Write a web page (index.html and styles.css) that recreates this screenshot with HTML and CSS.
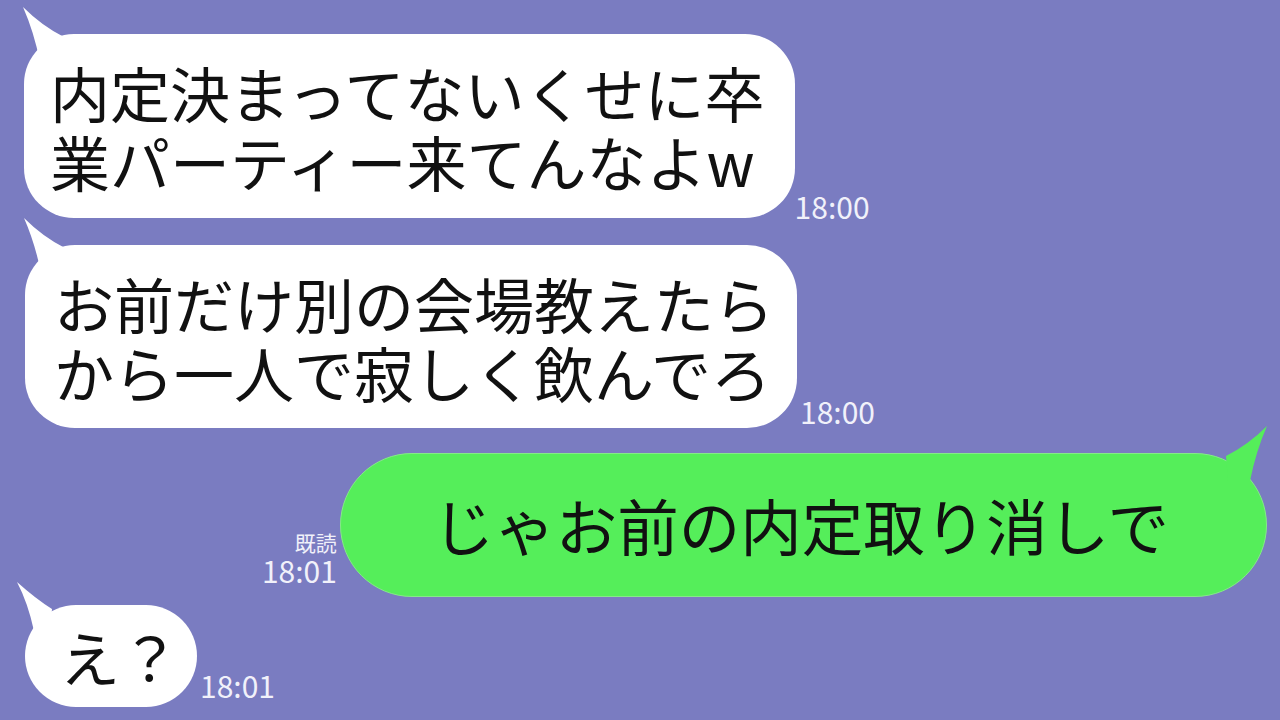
FILE: index.html
```html
<!DOCTYPE html>
<html lang="ja">
<head>
<meta charset="utf-8">
<title>chat</title>
<link rel="stylesheet" href="styles.css">
</head>
<body>
<div class="chat">
  <div class="row left r1">
    <div class="bubble white b1">
      <svg class="tail tail-left" viewBox="0 0 50 56" width="50" height="56"><path d="M1 1 Q20 20 42 31 L40 56 L18 56 Q12 26 1 1 Z"/></svg>
      <p class="msg">内定決まってないくせに卒<br>業パーティー来てんなよw</p>
    </div>
    <div class="meta m1"><span class="time">18:00</span></div>
  </div>
  <div class="row left r2">
    <div class="bubble white b2">
      <svg class="tail tail-left" viewBox="0 0 50 56" width="50" height="56"><path d="M1 1 Q20 20 42 31 L40 56 L18 56 Q12 26 1 1 Z"/></svg>
      <p class="msg">お前だけ別の会場教えたら<br>から一人で寂しく飲んでろ</p>
    </div>
    <div class="meta m2"><span class="time">18:00</span></div>
  </div>
  <div class="row right r3">
    <div class="meta meta-right"><span class="read">既読</span><span class="time">18:01</span></div>
    <div class="bubble green">
      <svg class="tail tail-right" viewBox="0 0 50 56" width="50" height="56"><path d="M49 1 Q30 20 8 31 L10 56 L32 56 Q38 26 49 1 Z"/></svg>
      <p class="msg msg-green">じゃお前の内定取り消しで</p>
    </div>
  </div>
  <div class="row left r4">
    <div class="bubble white small">
      <svg class="tail tail-small" viewBox="0 0 50 50" width="50" height="50"><path d="M1 1 Q20 18 36 28 L34 50 L18 50 Q12 22 1 1 Z"/></svg>
      <p class="msg">え？</p>
    </div>
    <div class="meta m4"><span class="time">18:01</span></div>
  </div>
</div>
</body>
</html>
```
FILE: styles.css
```css
html, body {
  margin: 0;
  padding: 0;
}
body {
  width: 1280px;
  height: 720px;
  overflow: hidden;
  background: #7a7cc1;
  font-family: "Noto Sans CJK JP", "Noto Sans", sans-serif;
}
.chat {
  display: flex;
  flex-direction: column;
  padding-top: 34px;
}
.row {
  display: flex;
  align-items: flex-end;
}
.row.left {
  padding-left: 24px;
  justify-content: flex-start;
}
.row.right {
  padding-right: 13px;
  justify-content: flex-end;
}
.r2 { margin-top: 27px; }
.r3 { margin-top: 25px; }
.r4 { margin-top: 8px; }

.bubble {
  position: relative;
  border-radius: 50px;
}
.bubble.white {
  background: #ffffff;
}
.bubble.b1 {
  padding: 23px 30px 23px 26px;
}
.bubble.b2 {
  padding: 23px 23px 22px 29px;
  margin-left: 1px;
}
.bubble.white .tail { fill: #ffffff; }
.bubble.green {
  background: #55ee5a;
  border: 1px solid #85ea88;
  border-radius: 72px;
  padding: 36px 97px 37px 92px;
}
.bubble.green .tail { fill: #55ee5a; }
.bubble.small {
  padding: 16px 17px 17px 35px;
  border-radius: 52px;
  margin-left: 1px;
}
.msg {
  margin: 0;
  font-size: 60px;
  line-height: 69px;
  color: #111111;
  white-space: nowrap;
}
.msg-green {
  font-size: 61.5px;
}
.tail {
  position: absolute;
  display: block;
}
.tail-left {
  left: -2px;
  top: -28px;
}
.tail-right {
  right: -2px;
  top: -29px;
}
.tail-small {
  left: -9px;
  top: -24px;
}
.meta {
  display: flex;
  flex-direction: column;
  color: #f1f1fa;
  margin-left: 2px;
}
.m1 { margin-bottom: -3px; margin-left: 0; }
.m2 { margin-bottom: 2px; margin-left: 3px; }
.m4 { margin-bottom: 7px; margin-left: 3px; }
.meta-right {
  align-items: flex-end;
  margin-left: 0;
  margin-right: 3px;
  margin-bottom: 12px;
}
.time {
  font-size: 30px;
  line-height: 30px;
  font-weight: 400;
}
.read {
  font-size: 21px;
  line-height: 26px;
}
```
